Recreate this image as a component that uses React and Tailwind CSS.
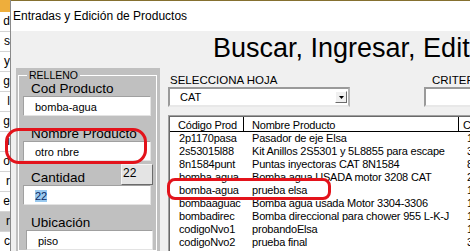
const rows = [
  ['2p1170pasa', 'Pasador de eje Elsa', '1'],
  ['2s53015l88', 'Kit Anillos 2S5301 y 5L8855 para escape', '3'],
  ['8n1584punt', 'Puntas inyectoras CAT 8N1584', '8'],
  ['bomba-agua', 'Bomba agua USADA motor 3208 CAT', '2'],
  ['bomba-agua', 'prueba elsa', '1'],
  ['bombaaguac', 'Bomba agua usada Motor 3304-3306', '1'],
  ['bombadirec', 'Bomba direccional para chower 955 L-K-J', '1'],
  ['codigoNvo1', 'probandoElsa', '1'],
  ['codigoNvo2', 'prueba final', '3'],
  ['codigoNvo3', 'prueba de descripción', '1'],
];

const sheet = ['d', 's', 'y', 'g', 'l', 'g', 'i', 'o', 'r', 'e', 'r', 'c'];

function TextBox({ children, className = '' }) {
  return (
    <div
      className={`h-[20px] bg-white border border-t-[#a0a0a0] border-l-[#a0a0a0] border-b-[#e3e3e3] border-r-[#e3e3e3] pl-[11px] pt-[2px] text-[11px] leading-[16px] whitespace-nowrap overflow-hidden ${className}`}
    >
      {children}
    </div>
  );
}

function Label({ children, className = '' }) {
  return (
    <div className={`pl-[8px] text-[13.5px] leading-[14px] h-[14px] whitespace-nowrap ${className}`}>
      {children}
    </div>
  );
}

export default function App() {
  return (
    <div className="relative flex w-[470px] h-[251px] overflow-hidden bg-white font-['Liberation_Sans',Arial,sans-serif] text-black">
      {/* spreadsheet behind */}
      <div className="flex w-[10px] shrink-0 flex-col overflow-hidden bg-white">
        <div className="h-[12px] shrink-0 bg-[#eeae3c]" />
        {sheet.map((t, i) => (
          <div
            key={i}
            className={`h-[20px] shrink-0 border-b border-[#d4d4d4] text-right text-[12px] leading-[19px] whitespace-nowrap ${i === 10 ? 'bg-[#c6c6c6] border-[#3f8f4f]' : ''}`}
          >
            {t}
          </div>
        ))}
      </div>

      {/* dialog */}
      <div className="flex min-w-0 flex-1 flex-col border-l border-[#8a8a8a]">
        <div className="h-px shrink-0 bg-[#85702f]" />
        <div className="flex h-[30px] shrink-0 items-center bg-white pl-[2px] text-[12px] whitespace-nowrap">
          Entradas y Edición de Productos
        </div>
        <div className="flex min-h-0 flex-1 flex-col bg-[#f0f0f0] pt-px">
          <div className="h-[32px] shrink-0 whitespace-nowrap pl-[202px] text-[27px] leading-[32px]">
            Buscar, Ingresar, Editar Productos
          </div>
          <div className="mt-[4px] flex min-h-0 flex-1">
            {/* left gray panel */}
            <div className="ml-[5px] flex w-[144px] shrink-0 flex-col bg-[#c0c0c0] pt-px pl-[2px] pr-[3px]">
              <fieldset className="min-w-0 flex-1 border border-white">
                <legend className="ml-[8px] px-[2px] text-[10.5px] leading-[12px]">RELLENO</legend>
                <div className="flex flex-col pl-[4px]">
                  <Label className="mt-px">Cod Producto</Label>
                  <TextBox className="w-[128px]">bomba-agua</TextBox>
                  <Label className="mt-[11px]">Nombre Producto</Label>
                  <TextBox className="w-[128px]">otro nbre</TextBox>
                  <div className="mt-[3px] flex h-[21px] w-[130px] items-end justify-between">
                    <Label>Cantidad</Label>
                    <div className="h-[21px] w-[32px] border border-[#f4f4f4] border-r-[#6b6b6b] border-b-[#6b6b6b] bg-[#e4e4e4] pl-px pt-[1px] text-[12px] leading-[14px]">
                      22
                    </div>
                  </div>
                  <TextBox className="w-[128px]">
                    <span className="bg-[#99c9ef] text-[#0b2a66]">22</span>
                  </TextBox>
                  <Label className="mt-[11px] h-[13px]">Ubicación</Label>
                  <TextBox className="ml-[3px] w-[127px]">piso</TextBox>
                </div>
              </fieldset>
            </div>

            {/* right column */}
            <div className="ml-[8px] flex min-w-0 flex-1 flex-col pt-[6px]">
              <div className="flex shrink-0">
                <div className="flex w-[182px] shrink-0 flex-col">
                  <div className="h-[13px] pl-[2px] text-[11.5px] leading-[13px] whitespace-nowrap">SELECCIONA HOJA</div>
                  <div className="flex h-[20px] items-center justify-between border-2 border-[#9a9a9a] border-b-[#e8e8e8] border-r-[#b4b4b4] bg-white pl-[10px] pr-px">
                    <span className="text-[11px] leading-[14px]">CAT</span>
                    <div className="flex h-[12px] w-[12px] items-center justify-center border border-white border-r-[#6b6b6b] border-b-[#6b6b6b] bg-[#f0f0f0]">
                      <svg width="5" height="3" viewBox="0 0 5 3">
                        <polygon points="0,0 5,0 2.5,3" fill="#000" />
                      </svg>
                    </div>
                  </div>
                </div>
                <div className="ml-[74px] flex min-w-0 flex-1 flex-col">
                  <div className="h-[13px] pl-[8px] text-[11.5px] leading-[13px] whitespace-nowrap">CRITERIO</div>
                  <div className="h-[20px] border-2 border-[#9a9a9a] border-b-[#e8e8e8] border-r-0 bg-white" />
                </div>
              </div>

              {/* listbox */}
              <div className="mt-[8px] min-h-0 flex-1 border-t border-l border-[#a0a0a0]">
                <div className="h-full border-t border-l border-[#696969] bg-white text-[11px] tracking-[-0.2px] whitespace-nowrap">
                  <div className="flex h-[15px] border-b border-black leading-[16px]">
                    <div className="w-[74px] shrink-0 border-r border-black pl-[8px]">Código Prod</div>
                    <div className="w-[215px] shrink-0 border-r border-black pl-[8px]">Nombre Producto</div>
                    <div className="pl-[4px]">Cantidad</div>
                  </div>
                  {rows.map((r, i) => (
                    <div key={i} className="flex h-[13px] leading-[13px]">
                      <div className="w-[74px] shrink-0 pl-[9px]">{r[0]}</div>
                      <div className="w-[215px] shrink-0 pl-[8px]">{r[1]}</div>
                      <div className="pl-[8px]">{r[2]}</div>
                    </div>
                  ))}
                </div>
              </div>
            </div>
          </div>
        </div>
      </div>

      {/* red annotation marks */}
      <div className="pointer-events-none absolute left-[5px] top-[128px] h-[36px] w-[142px] rounded-[14px] border-[3px] border-[#e3131b]" />
      <div className="pointer-events-none absolute left-[167px] top-[178px] h-[22px] w-[164px] rounded-[8px] border-[3px] border-[#e3131b]" />
    </div>
  );
}
